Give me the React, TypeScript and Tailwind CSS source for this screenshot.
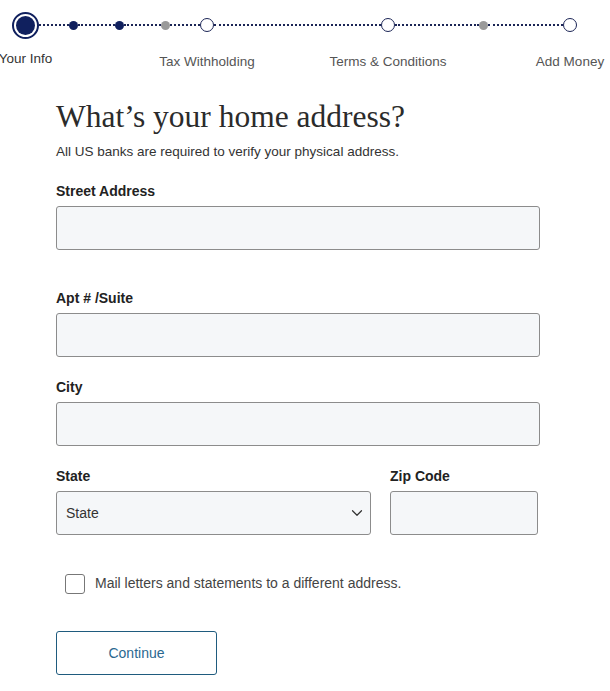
import { ChevronDown } from 'lucide-react';

const sans = { fontFamily: '"Liberation Sans", Arial, sans-serif' };

function Dots({ w }: { w: string }) {
  return <div className={`${w} border-t-2 border-dotted border-[#1b2556]`} />;
}

function Major({ label, big }: { label: string; big?: boolean }) {
  return (
    <div className="relative flex items-center justify-center">
      {big ? (
        <div className="w-[27px] h-[27px] rounded-full border-2 border-[#10205e] bg-white p-[2px]">
          <div className="w-full h-full rounded-full bg-[#10205e]" />
        </div>
      ) : (
        <div className="w-[14px] h-[14px] rounded-full border-[1.5px] border-[#1b2556] bg-white" />
      )}
      <span
        className={`absolute left-1/2 -translate-x-1/2 whitespace-nowrap text-[13.5px] ${
          big ? 'top-[37px] text-[#333]' : 'top-[34px] text-[#555]'
        }`}
      >
        {label}
      </span>
    </div>
  );
}

function Dot({ gray }: { gray?: boolean }) {
  return <div className={`w-[9px] h-[9px] rounded-full ${gray ? 'bg-[#9a9a9a]' : 'bg-[#10205e]'}`} />;
}

function Label({ children }: { children: React.ReactNode }) {
  return <label className="block text-[14px] font-bold text-[#222] leading-4 mb-[7px]">{children}</label>;
}

function Field({ label, className }: { label: string; className?: string }) {
  return (
    <div className={className}>
      <Label>{label}</Label>
      <input
        type="text"
        className="block w-full h-[44px] rounded-[3px] border border-[#8c8c8c] bg-[#f5f7f9] px-3 text-[13px]"
      />
    </div>
  );
}

export default function App() {
  return (
    <div className="w-[610px] h-[691px] bg-white overflow-hidden" style={sans}>
      {/* progress */}
      <div className="flex items-center h-[50px] pl-[12px]">
        <Major label="Your Info" big />
        <Dots w="w-[30px]" />
        <Dot />
        <Dots w="w-[37px]" />
        <Dot />
        <Dots w="w-[37px]" />
        <Dot gray />
        <Dots w="w-[30px]" />
        <Major label="Tax Withholding" />
        <Dots w="w-[167px]" />
        <Major label="Terms & Conditions" />
        <Dots w="w-[84px]" />
        <Dot gray />
        <Dots w="w-[75px]" />
        <Major label="Add Money" />
      </div>

      <div className="pl-[56px] pr-[70px] pt-[49px]">
        <h1
          className="text-[31.5px] leading-[36px] text-[#2b2b2b]"
          style={{ fontFamily: '"Liberation Serif", "Times New Roman", serif' }}
        >
          What’s your home address?
        </h1>
        <p className="mt-[9px] text-[13.5px] leading-4 text-[#333]">
          All US banks are required to verify your physical address.
        </p>

        <Field label="Street Address" className="mt-[23px]" />
        <Field label="Apt # /Suite" className="mt-[40px]" />
        <Field label="City" className="mt-[22px]" />

        <div className="flex gap-[19px] mt-[22px]">
          <div className="w-[315px]">
            <Label>State</Label>
            <div className="flex items-center justify-between h-[44px] rounded-[3px] border border-[#8c8c8c] bg-[#f5f7f9] pl-[9px] pr-[4px] text-[14px] text-[#333]">
              <span>State</span>
              <ChevronDown size={18} strokeWidth={1.6} className="text-[#333]" />
            </div>
          </div>
          <Field label="Zip Code" className="w-[148px]" />
        </div>

        <label className="flex items-center gap-[10px] mt-[38px] ml-[9px]">
          <span className="w-[20px] h-[20px] rounded-[3px] border border-[#777] bg-white" />
          <span className="text-[14px] text-[#444]">Mail letters and statements to a different address.</span>
        </label>

        <button className="mt-[37px] w-[161px] h-[44px] rounded-[3px] border border-[#1f5b7e] bg-white text-[14px] text-[#2a6890]">
          Continue
        </button>
      </div>
    </div>
  );
}
